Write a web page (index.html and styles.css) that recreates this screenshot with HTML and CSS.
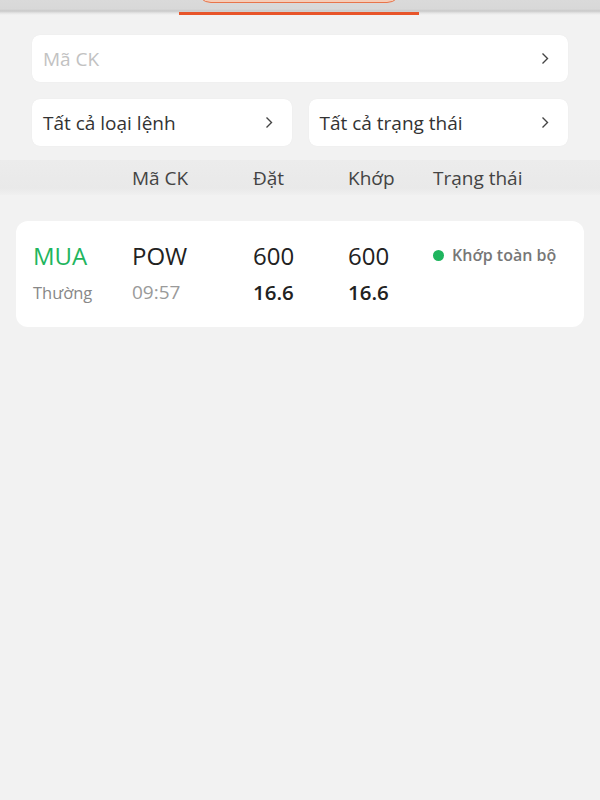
FILE: index.html
```html
<!DOCTYPE html>
<html lang="vi">
  <head>
    <meta charset="UTF-8" />
    <meta name="viewport" content="width=device-width, initial-scale=1.0" />
    <title>Sổ lệnh</title>
    <link rel="stylesheet" href="styles.css">
  </head>
  <body>
    <div class="tabbar">
      <div class="tab">
        <div class="pill"></div>
        <div class="indicator"></div>
      </div>
    </div>

    <div class="filters">
      <div class="field full">
        <span class="placeholder">Mã CK</span>
        <svg class="chev" width="8" height="13" viewBox="0 0 8 13"><path d="M1.5 1.5 L6.5 6.5 L1.5 11.5" /></svg>
      </div>
      <div class="field-row">
        <div class="field">
          <span>Tất cả loại lệnh</span>
          <svg class="chev" width="8" height="13" viewBox="0 0 8 13"><path d="M1.5 1.5 L6.5 6.5 L1.5 11.5" /></svg>
        </div>
        <div class="field">
          <span>Tất cả trạng thái</span>
          <svg class="chev" width="8" height="13" viewBox="0 0 8 13"><path d="M1.5 1.5 L6.5 6.5 L1.5 11.5" /></svg>
        </div>
      </div>
    </div>

    <div class="table-head">
      <span></span>
      <span>Mã CK</span>
      <span>Đặt</span>
      <span>Khớp</span>
      <span>Trạng thái</span>
    </div>

    <div class="order-card">
      <span class="side buy">MUA</span>
      <span class="symbol">POW</span>
      <span class="big">600</span>
      <span class="big">600</span>
      <span class="status"><i class="dot"></i>Khớp toàn bộ</span>

      <span class="type">Thường</span>
      <span class="time">09:57</span>
      <span class="price">16.6</span>
      <span class="price">16.6</span>
      <span></span>
    </div>
  </body>
</html>
```

FILE: styles.css
```css
body {
  margin: 0;
  background-color: #f2f2f2;
  font-family: "Open Sans", "Noto Sans", sans-serif;
  color: #333;
  height: 800px;
}
.tabbar {
  height: 15px;
  background: linear-gradient(#dadada 0, #d8d8d8 9px, #c9c9c9 11px, #e4e4e4 13px, #f2f2f2 15px);
  display: flex;
  justify-content: center;
  overflow: hidden;
}
.tab {
  width: 240px;
  margin-left: -2px;
  display: flex;
  flex-direction: column;
  align-items: center;
}
.pill {
  width: 204px;
  height: 30px;
  margin-top: -29px;
  border: 1.5px solid #e8744a;
  border-radius: 15px;
  background-color: #f6cdb8;
}
.indicator {
  margin-top: auto;
  width: 240px;
  height: 3px;
  background-color: #e8552a;
}
.filters {
  padding: 20px 32px 0 32px;
  display: flex;
  flex-direction: column;
  gap: 17px;
}
.field-row {
  display: flex;
  gap: 17px;
}
.field-row .field {
  flex: 1;
}
.field {
  height: 47px;
  background-color: #fff;
  border-radius: 8px;
  box-shadow: 0 0 1px rgba(0, 0, 0, 0.08);
  display: flex;
  align-items: center;
  justify-content: space-between;
  padding: 0 19px 0 11px;
  font-size: 19px;
  color: #333;
}
.field .placeholder {
  color: #c2c2c2;
}
.chev path {
  fill: none;
  stroke: #444;
  stroke-width: 1.4;
}
.table-head,
.order-card {
  display: grid;
  grid-template-columns: 99px 121px 95px 85px 1fr;
}
.table-head {
  margin-top: 14px;
  height: 35px;
  align-items: center;
  padding-left: 33px;
  background: linear-gradient(#ececec, #e9e9e9 80%, #f0f0f0);
  font-size: 19px;
  color: #444;
}
.order-card {
  margin: 26px 16px 0 16px;
  padding: 18px 0 21px 17px;
  background-color: #fff;
  border-radius: 12px;
  row-gap: 6px;
  align-items: center;
}
.side {
  font-size: 24px;
  font-weight: 500;
}
.buy {
  color: #1fb55e;
}
.symbol,
.big {
  font-size: 24px;
  font-weight: 500;
  color: #222;
}
.status {
  align-self: start;
  margin-top: 5px;
  font-size: 16px;
  font-weight: 600;
  color: #777;
  display: flex;
  align-items: center;
}
.dot {
  width: 11px;
  height: 11px;
  border-radius: 50%;
  background-color: #1fb55e;
  margin-right: 8px;
}
.type {
  font-size: 16.5px;
  color: #888;
}
.time {
  font-size: 19px;
  color: #9a9a9a;
}
.price {
  font-size: 20.5px;
  font-weight: 600;
  color: #222;
}
```
